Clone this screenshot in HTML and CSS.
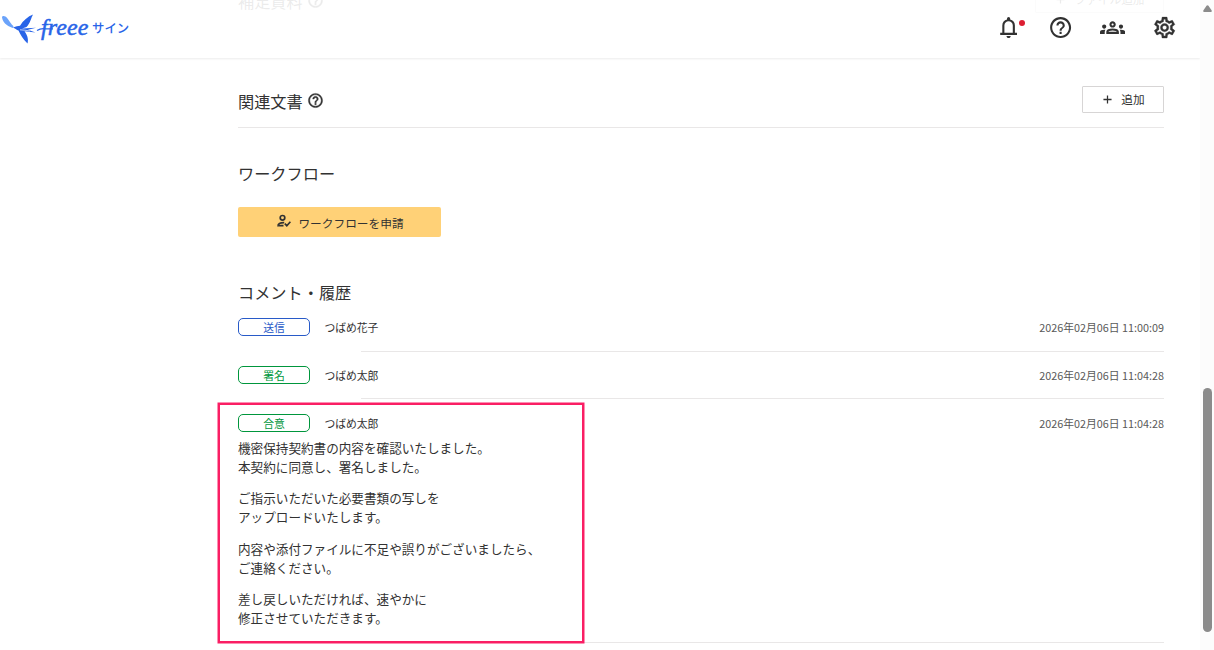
FILE: index.html
```html
<!DOCTYPE html>
<html lang="ja">
<head>
<meta charset="utf-8">
<title>freee サイン</title>
<link rel="stylesheet" href="styles.css">
</head>
<body>
<svg class="defs" width="0" height="0">
  <symbol id="help" viewBox="0 0 24 24"><path d="M11 18h2v-2h-2v2zm1-16C6.480 2 2 6.480 2 12s4.480 10 10 10 10-4.480 10-10S17.520 2 12 2zm0 18c-4.410 0-8-3.590-8-8s3.590-8 8-8 8 3.590 8 8-3.590 8-8 8zm0-14c-2.210 0-4 1.790-4 4h2c0-1.100.9-2 2-2s2 .9 2 2c0 2-3 1.750-3 5h2c0-2.250 3-2.500 3-5 0-2.210-1.790-4-4-4z"/></symbol>
</svg>
<div class="window">
  <div class="page">
    <header class="header">
      <div class="brand">
        <svg class="bird" width="62" height="34" viewBox="0 0 62 34">
          <path fill="#6ba3fa" d="M2 5.500C2.200 3.500 5 3.500 7.500 6.500C9.500 9 11 12 13.500 14.200L13 16C9.500 15 3 12 2 5.500Z"/>
          <path fill="#2864e8" d="M13 15.500C16 14 18 14.300 20 13.700C23 8.500 28 4.500 33 2.500C31 6 30.500 11 26.500 15L22 16.500L36 15.700L28 17.800L35.500 20.500L24.500 19.200C28 24 28.500 28 27.500 31.500C23 27 20.500 23 18.500 18.500C16.500 17.800 15 16.500 13 15.500Z"/>
          <path fill="none" stroke="#fff" stroke-width=".7" d="M20 17.800Q25 18 30 19"/>
          <path fill="none" stroke="#2864e8" stroke-width="1.300" d="M37 18.500Q41 15.800 46 16.800H53"/>
        </svg>
        <span class="wordmark">freee</span><span class="product">サイン</span>
      </div>
      <nav class="tools">
        <span class="tool">
          <svg viewBox="0 0 24 24"><path d="M4 19v-2h2v-7q0-2.075 1.250-3.688T10.500 4.200v-.7q0-.625.438-1.062T12 2t1.063.438.437 1.062v.7q2 .5 3.250 2.112T18 10v7h2v2zm8 3q-.825 0-1.412-.587T10 20h4q0 .825-.587 1.413T12 22m-4-5h8v-7q0-1.650-1.175-2.825T12 6 9.175 7.175 8 10z"/></svg>
          <i class="dot"></i>
        </span>
        <span class="tool"><svg><use href="#help"/></svg></span>
        <span class="tool"><svg viewBox="0 0 24 24"><path d="M4 13c1.100 0 2-.9 2-2s-.9-2-2-2-2 .9-2 2 .9 2 2 2zm1.130 1.100c-.37-.06-.74-.1-1.130-.1-.99 0-1.930.21-2.780.58C.48 14.900 0 15.620 0 16.430V18h4.500v-1.610c0-.83.23-1.610.63-2.290zM20 13c1.100 0 2-.9 2-2s-.9-2-2-2-2 .9-2 2 .9 2 2 2zm4 3.430c0-.81-.48-1.530-1.220-1.850-.85-.37-1.790-.58-2.780-.58-.39 0-.76.04-1.130.1.4.68.63 1.460.63 2.290V18H24v-1.570zm-7.760-2.780c-1.170-.52-2.610-.9-4.240-.9-1.630 0-3.070.39-4.240.9C6.680 14.130 6 15.210 6 16.390V18h12v-1.610c0-1.180-.68-2.260-1.760-2.740zM8.070 16c.09-.23.13-.39.91-.69.97-.38 1.990-.56 3.020-.56s2.050.18 3.020.56c.77.3.81.46.91.69H8.070zM12 8c.55 0 1 .45 1 1s-.45 1-1 1-1-.45-1-1 .45-1 1-1m0-2c-1.660 0-3 1.340-3 3s1.340 3 3 3 3-1.340 3-3-1.340-3-3-3z"/></svg></span>
        <span class="tool gear"><svg viewBox="0 0 24 24"><path d="M19.430 12.980c.04-.32.07-.64.07-.98 0-.34-.03-.66-.07-.98l2.110-1.650c.19-.15.24-.42.12-.64l-2-3.460c-.09-.16-.26-.25-.44-.25-.06 0-.12.01-.17.03l-2.490 1c-.52-.4-1.080-.73-1.690-.98l-.38-2.650C14.460 2.180 14.250 2 14 2h-4c-.25 0-.46.18-.49.42l-.38 2.650c-.61.25-1.170.59-1.690.98l-2.490-1c-.06-.02-.12-.03-.18-.03-.17 0-.34.09-.43.25l-2 3.460c-.13.22-.07.49.12.64l2.110 1.650c-.04.32-.07.65-.07.98 0 .33.03.66.07.98l-2.110 1.650c-.19.15-.24.42-.12.64l2 3.460c.09.16.26.25.44.25.06 0 .12-.01.17-.03l2.490-1c.52.4 1.080.73 1.690.98l.38 2.650c.03.24.24.42.49.42h4c.25 0 .46-.18.49-.42l.38-2.650c.61-.25 1.170-.59 1.690-.98l2.490 1c.06.02.12.03.18.03.17 0 .34-.09.43-.25l2-3.460c.12-.22.07-.49-.12-.64l-2.110-1.650zm-1.980-1.710c.04.31.05.52.05.73 0 .21-.02.43-.05.73l-.14 1.130.89.7 1.080.84-.7 1.210-1.270-.51-1.040-.42-.9.68c-.43.32-.84.56-1.250.73l-1.060.43-.16 1.130-.2 1.350h-1.400l-.19-1.350-.16-1.130-1.060-.43c-.43-.18-.83-.41-1.230-.71l-.91-.7-1.060.43-1.270.51-.7-1.210 1.080-.84.89-.7-.14-1.130c-.03-.31-.05-.54-.05-.74s.02-.43.05-.73l.14-1.130-.89-.7-1.080-.84.7-1.210 1.270.51 1.040.42.9-.68c.43-.32.84-.56 1.250-.73l1.060-.43.16-1.130.2-1.350h1.390l.19 1.350.16 1.130 1.060.43c.43.18.83.41 1.230.71l.91.7 1.060-.43 1.270-.51.7 1.210-1.070.85-.89.7.14 1.130zM12 8c-2.210 0-4 1.790-4 4s1.790 4 4 4 4-1.790 4-4-1.790-4-4-4zm0 6c-1.100 0-2-.9-2-2s.9-2 2-2 2 .9 2 2-.9 2-2 2z"/></svg></span>
      </nav>
    </header>
    <main class="content">
      <section class="bar scrolled">
        <h2 class="title">補足資料</h2><svg class="hint"><use href="#help"/></svg>
        <button class="btn wide"><svg class="plus" viewBox="0 0 10 10"><path d="M5 .5v9M.5 5h9"/></svg>ファイル追加</button>
      </section>
      <section class="bar">
        <h2 class="title">関連文書</h2><svg class="hint"><use href="#help"/></svg>
        <button class="btn"><svg class="plus" viewBox="0 0 10 10"><path d="M5 .5v9M.5 5h9"/></svg>追加</button>
      </section>
      <section class="workflow">
        <h2 class="title">ワークフロー</h2>
        <button class="apply"><svg class="reg" viewBox="0 0 15 14"><path d="M2 11.700Q2.300 8.500 8.200 8.600M1.200 11.700H7.500M8.800 9.700L10.800 11.700L14.400 7.700"/><circle cx="6.500" cy="3.800" r="2.300"/></svg>ワークフローを申請</button>
      </section>
      <section class="history">
        <h2 class="title">コメント・履歴</h2>
        <article class="entry">
          <div class="row"><span class="badge sent">送信</span><span class="name">つばめ花子</span><time>2026年02月06日 11:00:09</time></div>
        </article>
        <article class="entry second">
          <div class="row"><span class="badge">署名</span><span class="name">つばめ太郎</span><time>2026年02月06日 11:04:28</time></div>
        </article>
        <article class="entry last">
          <div class="row"><span class="badge">合意</span><span class="name">つばめ太郎</span><time>2026年02月06日 11:04:28</time></div>
          <div class="comment">
            <p>機密保持契約書の内容を確認いたしました。<br>本契約に同意し、署名しました。</p>
            <p>ご指示いただいた必要書類の写しを<br>アップロードいたします。</p>
            <p>内容や添付ファイルに不足や誤りがございましたら、<br>ご連絡ください。</p>
            <p>差し戻しいただければ、速やかに<br>修正させていただきます。</p>
          </div>
          <div class="focus"></div>
        </article>
      </section>
    </main>
  </div>
  <aside class="scrollbar"><svg class="up" viewBox="0 0 9 7"><path d="M3.500.8Q4.500-.3 5.500.8L8.700 5.600Q9 7 8 7H1Q0 7 .3 5.600Z"/></svg><div class="thumb"></div></aside>
</div>
</body>
</html>
```

FILE: styles.css
```css
* { box-sizing: border-box; }
body {
  margin: 0;
  background: #fff;
  color: #323232;
  font-family: "Noto Sans CJK JP", sans-serif;
}
.defs { position: absolute; }
.window { display: flex; height: 650px; overflow: hidden; }
.page { position: relative; width: 1200px; height: 650px; overflow: hidden; }

.header {
  position: absolute;
  inset: 0 0 auto;
  z-index: 2;
  height: 58px;
  display: flex;
  justify-content: space-between;
  background: rgba(255, 255, 255, .9);
  box-shadow: 0 1px 2px rgba(0, 0, 0, .08);
}
.brand { display: flex; height: 56px; padding-top: 12px; color: #2864e8; }
.bird { flex: none; }
.wordmark {
  width: 49px;
  margin-left: -21px;
  font: italic 24px/30px "Liberation Serif", serif;
  letter-spacing: .1px;
  -webkit-text-stroke: .5px #2864e8;
}
.product { margin-left: 2px; font-size: 12.4px; font-weight: 500; line-height: 33px; }
.tools { display: flex; gap: 27px; padding: 15px 22.500px 0 0; }
.tool { position: relative; width: 25.200px; height: 25.200px; }
.tool svg { display: block; width: 100%; height: 100%; fill: #323232; }
.tool.gear svg { stroke: #323232; stroke-width: .3; }
.dot { position: absolute; left: 23px; top: 5px; width: 6px; height: 6px; border-radius: 50%; background: #dc1e32; }

.content { width: 926px; margin-left: 238px; }
.title { margin: 0; font-size: 16.2px; font-weight: 400; line-height: 24px; }
.bar { display: flex; align-items: center; height: 56px; border-bottom: 1px solid #e9e7e7; }
.bar .title { margin-top: 2px; }
.scrolled { height: 72px; margin-top: -30px; margin-bottom: 30px; padding-bottom: 12px; border: 0; }
.scrolled .btn { margin-top: -1px; }
.hint { width: 17px; height: 17px; margin: 1px 0 0 4px; fill: #323232; stroke: #323232; stroke-width: .5; }
.btn {
  display: flex;
  align-items: center;
  justify-content: center;
  gap: 9px;
  width: 82px;
  height: 27px;
  margin-left: auto;
  padding: 0 0 2px 2px;
  border: 1px solid #d7d5d5;
  border-radius: 1px;
  background: #fff;
  color: #323232;
  font: 400 11.7px/18px "Noto Sans CJK JP", sans-serif;
}
.btn.wide { width: 129px; }
.plus { width: 9px; height: 9px; margin-top: 1px; fill: none; stroke: #323232; stroke-width: 1.400; }
.workflow { padding-top: 33px; }
.apply {
  display: flex;
  align-items: center;
  justify-content: center;
  gap: 7px;
  width: 203px;
  height: 30px;
  margin-top: 22px;
  padding: 2px 0 0 1px;
  border: 0;
  border-radius: 2px;
  background: #ffd177;
  color: #323232;
  font: 400 11.7px/18px "Noto Sans CJK JP", sans-serif;
}
.reg { width: 15px; height: 14px; margin-top: -4px; fill: none; stroke: #323232; stroke-width: 1.700; }

.history { padding-top: 43px; }
.history .title { margin-bottom: 14px; }
.entry { position: relative; height: 34px; margin-bottom: 14px; }
.entry::after { content: ""; position: absolute; left: 123px; right: 0; bottom: 0; height: 1px; background: #e9e7e7; }
.entry.second { height: 33px; margin-bottom: 15px; }
.entry.last { height: 229px; margin: 0; }
.row { display: flex; align-items: center; height: 18px; font-size: 10.8px; line-height: 18px; }
.badge {
  width: 72px;
  height: 18px;
  border: 1px solid #00963c;
  border-radius: 5px;
  color: #00963c;
  text-align: center;
  line-height: 16px;
}
.badge.sent { border-color: #285ac8; color: #285ac8; }
.name { margin-left: 14.400px; }
time { margin-left: auto; color: #595959; }
.comment { padding-top: 7px; font-size: 12.6px; line-height: 18.900px; }
.comment p { margin: 0 0 12.600px; }
.focus { position: absolute; z-index: 1; left: -20px; top: -11px; width: 366px; height: 240px; border: 2px solid #fa1e64; box-shadow: 0 0 0 .5px #fa1e64; }

.scrollbar { position: relative; display: flex; flex-direction: column; width: 14px; padding: 5px 0 0 3px; background: #fcfcfc; }
.up { display: block; width: 9px; height: 7px; fill: #8b8b8b; }
.thumb { width: 9px; height: 244px; margin-top: 376px; border-radius: 5px; background: #8b8b8b; }
```
